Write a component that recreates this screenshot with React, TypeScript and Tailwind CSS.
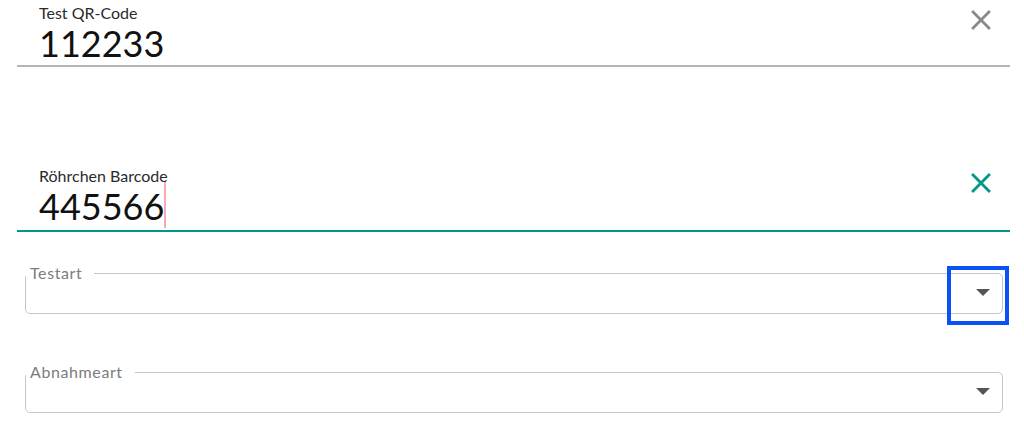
import React from "react"

const font = { fontFamily: "Lato, 'Noto Sans', sans-serif" }

function CloseIcon({ color }: { color: string }) {
  return (
    <svg width="34" height="34" viewBox="0 0 24 24" fill={color}>
      <path d="M19 6.41L17.59 5 12 10.59 6.41 5 5 6.41 10.59 12 5 17.59 6.41 19 12 13.41 17.59 19 19 17.59 13.41 12z" />
    </svg>
  )
}

function TextField({
  label,
  value,
  focused,
}: {
  label: string
  value: string
  focused?: boolean
}) {
  return (
    <div
      className={
        "ml-[17px] flex w-[993px] border-b-2 " +
        (focused ? "border-[#00968a]" : "border-[#b4b4b4]")
      }
    >
      <div className="flex-1 pb-[2px] pl-[22px] pt-[4px]">
        <div className="text-[16px] leading-[18px] text-[#2b2b2b]">{label}</div>
        <div className="mt-[1px] flex items-start text-[36px] leading-[40px] text-[#111]">
          <span>{value}</span>
          {focused && <span className="-mt-[4px] h-[46px] w-[2px] bg-[#f5aab8]" />}
        </div>
      </div>
      <div className="pr-[12px] pt-[3px]">
        <CloseIcon color={focused ? "#00968a" : "#8a8a8a"} />
      </div>
    </div>
  )
}

function SelectField({ label, highlight }: { label: string; highlight?: boolean }) {
  return (
    <div className="relative ml-[25px] w-[978px]">
      <fieldset className="h-[50px] rounded-[5px] border border-[#c6c6c6]">
        <legend className="pl-[4px] pr-[12px] text-[16px] leading-[18px] tracking-[0.6px] text-[#7c7c7c]">
          {label}
        </legend>
        <div className="flex justify-end pr-[12px] pt-[7px]">
          <span className="h-0 w-0 border-l-[7px] border-r-[7px] border-t-[7px] border-l-transparent border-r-transparent border-t-[#555]" />
        </div>
      </fieldset>
      {highlight && (
        <div className="absolute left-[922px] top-[2px] h-[59px] w-[62px] border-4 border-[#0a52f5]" />
      )}
    </div>
  )
}

export default function App() {
  return (
    <div className="h-[427px] w-[1024px] overflow-hidden bg-white" style={font}>
      <TextField label="Test QR-Code" value="112233" />
      <div className="mt-[96px]">
        <TextField label="Röhrchen Barcode" value="445566" focused />
      </div>
      <div className="mt-[32px]">
        <SelectField label="Testart" highlight />
      </div>
      <div className="mt-[49px]">
        <SelectField label="Abnahmeart" />
      </div>
    </div>
  )
}
